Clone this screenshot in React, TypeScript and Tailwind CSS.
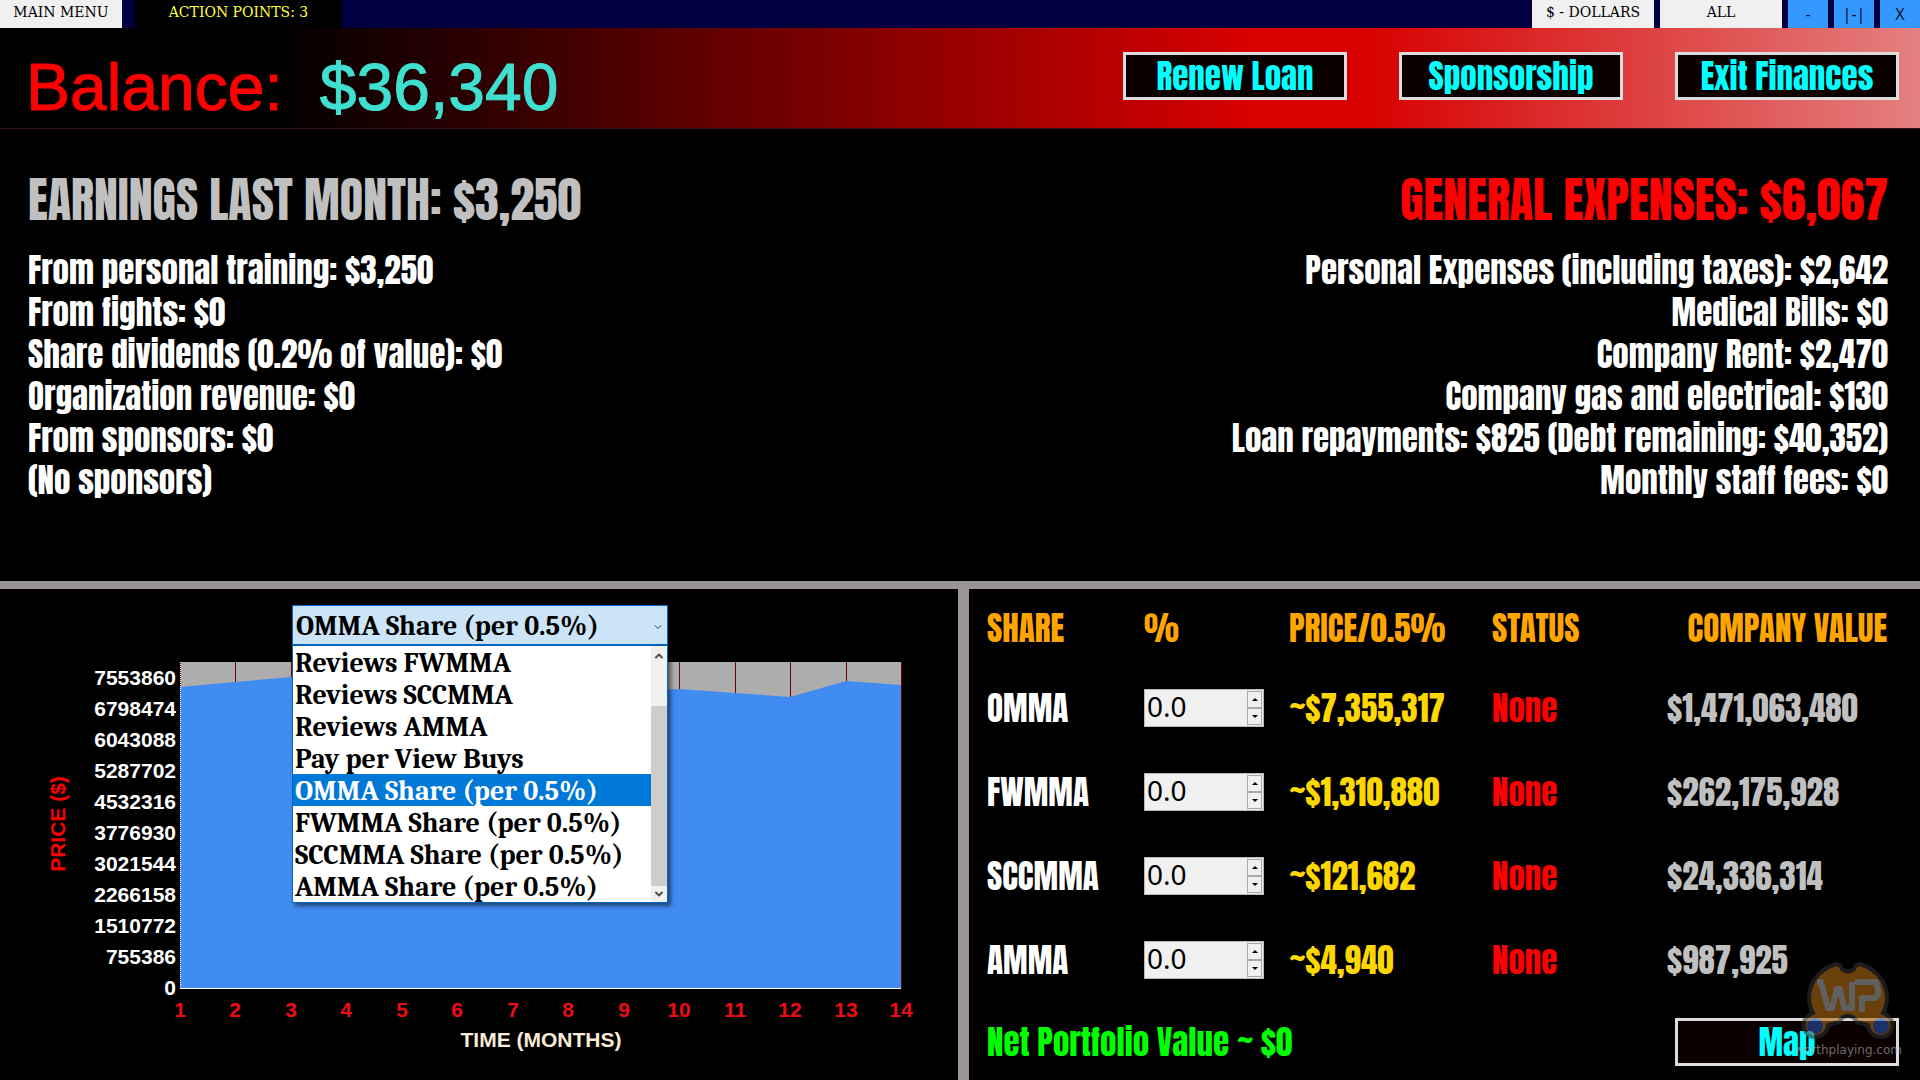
import { ChevronDown, ChevronUp } from 'lucide-react'

const IMPACT = "font-[Impact,Anton,'Roboto_Condensed',sans-serif] font-normal"

const earnings = [
  'From personal training: $3,250',
  'From fights: $0',
  'Share dividends (0.2% of value): $0',
  'Organization revenue: $0',
  'From sponsors: $0',
  '(No sponsors)',
]

const expenses = [
  'Personal Expenses (including taxes): $2,642',
  'Medical Bills: $0',
  'Company Rent: $2,470',
  'Company gas and electrical: $130',
  'Loan repayments: $825 (Debt remaining: $40,352)',
  'Monthly staff fees: $0',
]

const series = [
  'Reviews FWMMA',
  'Reviews SCCMMA',
  'Reviews AMMA',
  'Pay per View Buys',
  'OMMA Share (per 0.5%)',
  'FWMMA Share (per 0.5%)',
  'SCCMMA Share (per 0.5%)',
  'AMMA Share (per 0.5%)',
]
const selected = 'OMMA Share (per 0.5%)'

const shares = [
  { name: 'OMMA', price: '~$7,355,317', status: 'None', value: '$1,471,063,480' },
  { name: 'FWMMA', price: '~$1,310,880', status: 'None', value: '$262,175,928' },
  { name: 'SCCMMA', price: '~$121,682', status: 'None', value: '$24,336,314' },
  { name: 'AMMA', price: '~$4,940', status: 'None', value: '$987,925' },
]

const yTicks = [7553860, 6798474, 6043088, 5287702, 4532316, 3776930, 3021544, 2266158, 1510772, 755386, 0]
// Height of the area's top edge for each month, in chart units
const prices = [42, 37, 32, 34, 37, 40, 42, 45, 46, 44, 48, 52, 36, 40]

const PLOT = { left: 180, right: 901, top: 17, bottom: 343 }
const monthX = (i: number) => Math.round(PLOT.left + (i * (PLOT.right - PLOT.left)) / 13)

function TopBar() {
  const light = 'h-7 w-[122px] bg-[#f0f0f0] pb-1 text-black'
  const blue = "h-7 w-10 bg-[#3399ff] font-['Noto_Sans',sans-serif] text-base text-[#001030]"
  return (
    <header className="flex h-7 justify-between bg-[#000040] font-['DejaVu_Serif',serif] text-sm">
      <div className="flex gap-[13px]">
        <button className={light}>MAIN MENU</button>
        <div className="flex w-[207px] items-center justify-center bg-black pb-1 text-[#ffff40]">ACTION POINTS: 3</div>
      </div>
      <div className="flex gap-1.5">
        <button className={light}>$ - DOLLARS</button>
        <button className={light}>ALL</button>
        <button className={blue}>-</button>
        <button className={blue}>|-|</button>
        <button className={blue}>X</button>
      </div>
    </header>
  )
}

function ActionButton({ children }: { children: string }) {
  return (
    <button className={`h-12 w-56 border-3 border-[#dcdcdc] bg-[#0a0000] text-[33px] leading-10 text-[#00ffff] ${IMPACT}`}>
      {children}
    </button>
  )
}

function Banner() {
  return (
    <div className="flex h-[101px] items-start justify-between border-b border-[#3a1010] bg-[linear-gradient(to_right,#000_14%,#d80000_65%,#d80000_71%,#e48080)] pr-[21px] pl-[26px]">
      <h1 className="flex gap-[37px] font-['Liberation_Sans',sans-serif] text-[66px] leading-[118px] [-webkit-text-stroke:1px]">
        <span className="text-[#ff0000]">Balance:</span>
        <span className="text-[#40e0d0]">$36,340</span>
      </h1>
      <div className="flex gap-[52px] pt-6">
        <ActionButton>Renew Loan</ActionButton>
        <ActionButton>Sponsorship</ActionButton>
        <ActionButton>Exit Finances</ActionButton>
      </div>
    </div>
  )
}

function Summary() {
  return (
    <main className={`flex flex-1 justify-between pt-10 pr-8 pl-7 text-white ${IMPACT}`}>
      <section>
        <h2 className="text-[48px] leading-[62px] text-[#c0c0c0]">EARNINGS LAST MONTH: $3,250</h2>
        <ul className="pt-[18px] text-[33px] leading-[42px]">
          {earnings.map((line) => (
            <li key={line}>{line}</li>
          ))}
        </ul>
      </section>
      <section className="text-right">
        <h2 className="text-[48px] leading-[62px] text-[#ff0000]">GENERAL EXPENSES: $6,067</h2>
        <ul className="pt-[18px] text-[33px] leading-[42px]">
          {expenses.map((line) => (
            <li key={line}>{line}</li>
          ))}
        </ul>
      </section>
    </main>
  )
}

function SeriesPicker() {
  return (
    <div className="relative w-[376px] font-[Cambria,Caladea,'Liberation_Serif',serif] text-[28px] font-bold text-black">
      <select
        aria-label="Chart series"
        defaultValue={selected}
        className="block h-10 w-full appearance-none border border-[#0067c0] bg-[#cce4f7] pt-0.5 pl-[3px] leading-8"
      >
        {series.map((s) => (
          <option key={s}>{s}</option>
        ))}
      </select>
      <ChevronDown className="pointer-events-none absolute top-4 right-1 size-3 text-[#404040]" />
      <div className="absolute top-full left-0 flex w-full border border-[#0067c0] bg-white shadow-[3px_3px_4px_rgba(0,0,0,0.5)]">
        <ul role="listbox" aria-label="Chart series" className="flex-1">
          {series.map((s) => (
            <li
              key={s}
              role="option"
              aria-selected={s === selected}
              className={`h-8 overflow-hidden pl-0.5 leading-[34px] ${s === selected ? 'bg-[#0078d7] text-white' : ''}`}
            >
              {s}
            </li>
          ))}
        </ul>
        <div className="flex w-4 flex-col items-center justify-between bg-[#f0f0f0]">
          <ChevronUp className="mt-1 size-3 text-[#505050]" strokeWidth={4} />
          <div className="mt-11 w-full flex-1 bg-[#cdcdcd]" />
          <ChevronDown className="my-0.5 size-3 text-[#505050]" strokeWidth={4} />
        </div>
      </div>
    </div>
  )
}

function PriceChart() {
  const edge = prices.map((y, i) => `${monthX(i)},${y}`).join(' ')
  return (
    <svg viewBox="0 0 958 435" className="block w-full font-['Liberation_Sans',sans-serif] text-[21px] font-bold">
      <rect x={PLOT.left} y={PLOT.top} width={PLOT.right - PLOT.left} height={PLOT.bottom - PLOT.top} fill="#adadad" />
      {prices.map((_, i) => (
        <line key={i} x1={monthX(i)} x2={monthX(i)} y1={PLOT.top} y2={PLOT.bottom} stroke="#780000" shapeRendering="crispEdges" />
      ))}
      <polygon points={`${PLOT.left},${PLOT.bottom} ${edge} ${PLOT.right},${PLOT.bottom}`} fill="#418cf0" />
      <line x1={PLOT.left} x2={PLOT.left} y1={PLOT.top} y2={PLOT.bottom} stroke="#fff" strokeDasharray="1 1" shapeRendering="crispEdges" />
      <line x1={PLOT.left} x2={PLOT.right} y1={PLOT.bottom} y2={PLOT.bottom} stroke="#fff" shapeRendering="crispEdges" />
      {yTicks.map((t, i) => (
        <text key={t} x={176} y={40 + i * 31} textAnchor="end" fill="#fff">
          {t}
        </text>
      ))}
      {prices.map((_, i) => (
        <text key={i} x={monthX(i)} y={372} textAnchor="middle" fill="#ed0c14">
          {i + 1}
        </text>
      ))}
      <text x={541} y={402} textAnchor="middle" fill="#faebd7">
        TIME (MONTHS)
      </text>
      <text transform="translate(65 179) rotate(-90)" textAnchor="middle" fill="#ff0000">
        PRICE ($)
      </text>
    </svg>
  )
}

function Spinner({ label }: { label: string }) {
  const arrow = 'flex flex-1 items-center justify-center border border-[#a8a8a8] bg-[#f0f0f0]'
  return (
    <div className="flex h-[38px] w-[120px] border border-[#b8b8b8] bg-[#f0f0f0] p-px">
      <input
        aria-label={label}
        defaultValue="0.0"
        className="min-w-0 flex-1 pb-1 pl-px font-['Noto_Sans',sans-serif] text-[28px] leading-8 font-normal text-black"
      />
      <div className="flex w-[15px] flex-col">
        <button aria-label={`Increase ${label}`} className={arrow}>
          <svg viewBox="0 0 6 3" className="h-[3px] w-1.5">
            <path d="M0 3L3 0L6 3Z" />
          </svg>
        </button>
        <button aria-label={`Decrease ${label}`} className={arrow}>
          <svg viewBox="0 0 6 3" className="h-[3px] w-1.5">
            <path d="M0 0L3 3L6 0Z" />
          </svg>
        </button>
      </div>
    </div>
  )
}

function ShareTable() {
  return (
    <table className="w-full table-fixed text-left leading-10">
      <thead className="text-[#ffa500]">
        <tr className="h-[77px]">
          <th className="w-[157px] font-normal">SHARE</th>
          <th className="w-[145px] font-normal">%</th>
          <th className="w-[203px] font-normal">PRICE/0.5%</th>
          <th className="w-[175px] font-normal">STATUS</th>
          <th className="pr-3 text-right font-normal">COMPANY VALUE</th>
        </tr>
      </thead>
      <tbody>
        {shares.map((s) => (
          <tr key={s.name} className="h-21">
            <td className="text-white">{s.name}</td>
            <td>
              <Spinner label={`${s.name} %`} />
            </td>
            <td className="text-[#ffd700]">{s.price}</td>
            <td className="text-[#ff0000]">{s.status}</td>
            <td className="text-[#c0c0c0]">{s.value}</td>
          </tr>
        ))}
      </tbody>
    </table>
  )
}

function Watermark() {
  return (
    <div className="pointer-events-none absolute right-[18px] bottom-[22px] flex flex-col items-center opacity-60">
      <svg viewBox="0 0 94 82" className="h-[82px] w-[94px]">
        <path
          d="M35 4Q20 8 12 22Q4 38 12 53Q1 58 3 68Q7 80 19 76Q26 73 27 65L38 62Q41 56 47 56Q53 56 56 62L67 65Q68 73 75 76Q87 80 91 68Q93 58 82 53Q90 38 82 22Q74 8 59 4Q55 4 53 9Q47 14 41 9Q39 4 35 4Z"
          fill="#b06c10"
          stroke="#303030"
          strokeWidth="4"
        />
        <circle cx="14" cy="66" r="8" fill="#2850b0" />
        <circle cx="80" cy="66" r="8" fill="#2850b0" />
        <path
          d="M16 22H20L27 48H31L36 29H39L43 48H51V22M61 52V38H73Q78 37 77 30L75 22H54"
          fill="none"
          stroke="#a0a0a0"
          strokeWidth="6"
          strokeLinejoin="round"
        />
      </svg>
      <span className="font-['DejaVu_Sans',sans-serif] text-xs leading-4 text-[#b0b0b0]">worthplaying.com</span>
    </div>
  )
}

export default function App() {
  return (
    <div className="flex min-h-screen flex-col bg-black">
      <TopBar />
      <Banner />
      <Summary />
      <div className="grid grid-cols-[958fr_11px_951fr] border-t-8 border-[#9a9494]">
        <section className="pt-4">
          <div className="pl-[292px]">
            <SeriesPicker />
          </div>
          <PriceChart />
        </section>
        <div className="bg-[#9a9494]" />
        <section className={`relative pr-[21px] pl-[18px] text-[33px] ${IMPACT}`}>
          <ShareTable />
          <div className="flex items-center justify-between pt-4">
            <p className="leading-10 text-[#00ff00]">Net Portfolio Value ~ $0</p>
            <ActionButton>Map</ActionButton>
          </div>
          <Watermark />
        </section>
      </div>
    </div>
  )
}
